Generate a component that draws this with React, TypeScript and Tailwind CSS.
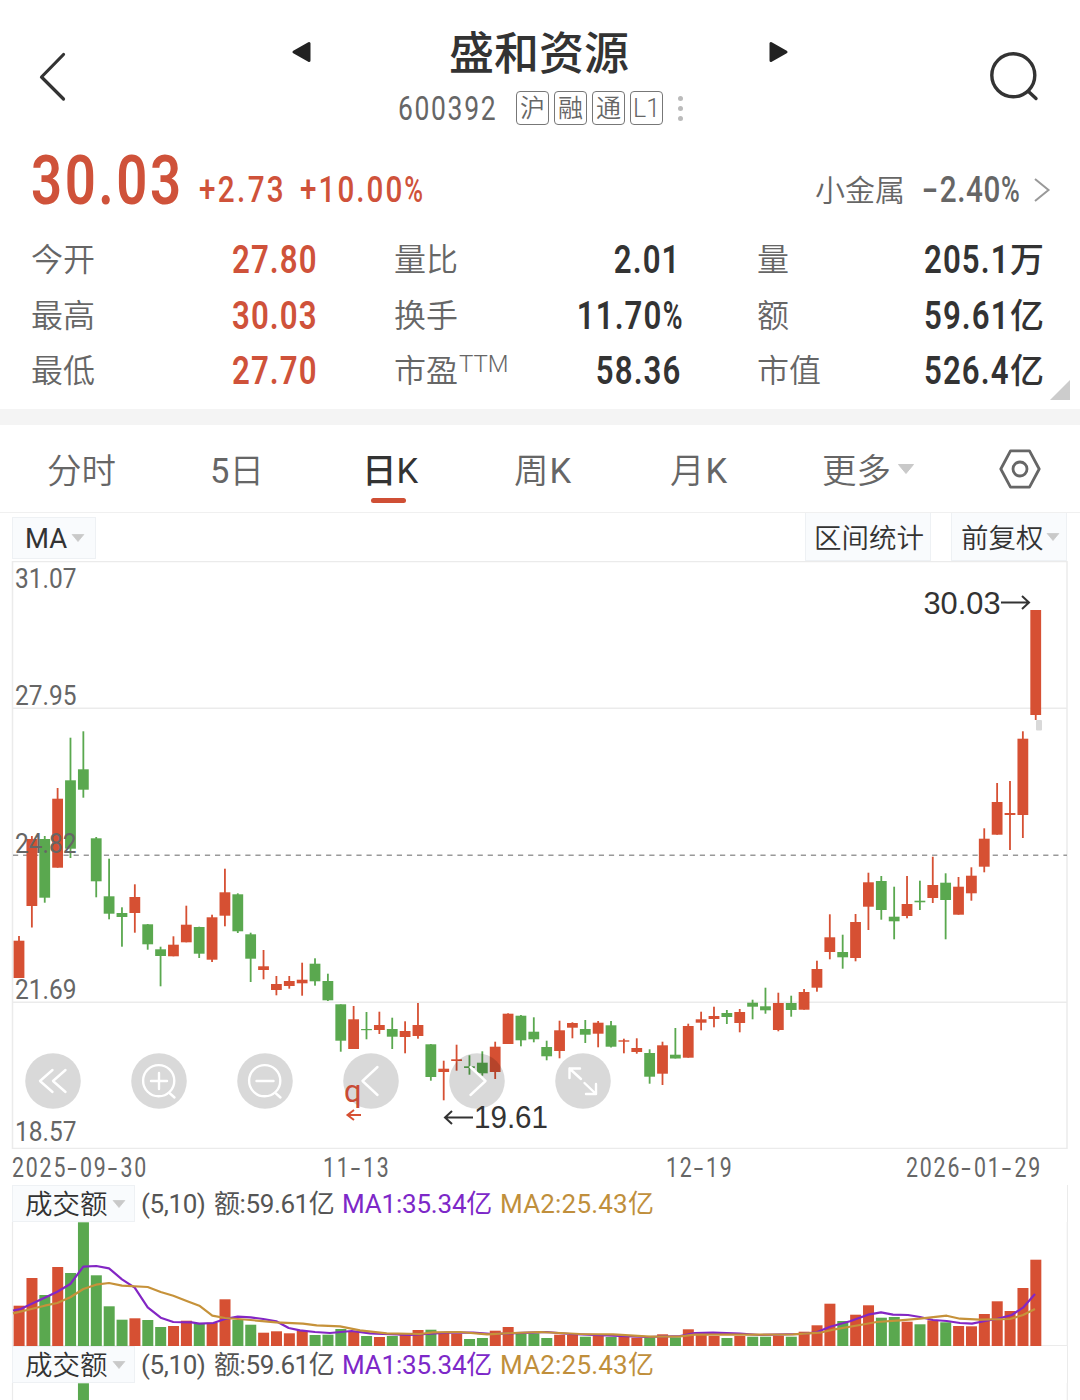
import React from 'react';

const RED = '#d65033';
const GREEN = '#5aa84f';
const STEP = 12.87;
const X0 = 18.9;

// [direction, high, bodyTop, bodyBottom, low, volumeTop]
type Candle = [string, number, number, number, number, number];
const candles: Candle[] = [
  ['R', 936, 940.7, 978, 978, 1305.7], ['R', 836, 839, 906, 927.5, 1278], ['G', 836, 839, 897.7, 902.7, 1295],
  ['R', 788, 798.7, 867.7, 867.7, 1267], ['G', 737.7, 780.3, 848.7, 858, 1273], ['G', 731.3, 769.3, 789.7, 797.7, 1222.3],
  ['G', 837, 838.3, 881.3, 897.3, 1275.3], ['G', 858.7, 896.3, 913.7, 919.3, 1306.3], ['G', 907.3, 913, 917, 946.7, 1319.7],
  ['R', 884.3, 897, 913, 932.7, 1318.3], ['G', 924, 924.3, 944.3, 949.7, 1320], ['G', 946.7, 949.3, 956, 986.3, 1327],
  ['R', 936.3, 944.7, 956.3, 956.3, 1326], ['R', 905.7, 924.7, 942.3, 942.3, 1320.7], ['G', 926.7, 927, 953.7, 958, 1324],
  ['R', 914.7, 917.3, 959.7, 962, 1322.7], ['R', 868.7, 892.3, 915.7, 926.3, 1299.3], ['G', 893.3, 894.3, 931.3, 933, 1320],
  ['G', 932.7, 934.3, 958.7, 982, 1324.7], ['R', 950, 966.3, 970, 979.3, 1332.7], ['R', 976, 984, 990, 995.3, 1331.3],
  ['R', 976, 981, 986, 988.7, 1333.3], ['R', 962.7, 979.7, 983.3, 995.7, 1331], ['G', 958.3, 963.7, 981.3, 985.7, 1335],
  ['G', 973.7, 981, 1000.3, 1001, 1334.7], ['G', 1004.3, 1004.3, 1040.7, 1051.7, 1329], ['R', 1006, 1019.3, 1049, 1049, 1331],
  ['G', 1012, 1029, 1030.2, 1039.3, 1336], ['R', 1011.7, 1025, 1030, 1034, 1337], ['G', 1017.7, 1029, 1036.7, 1049, 1336],
  ['R', 1021.3, 1031, 1037, 1053.3, 1334], ['R', 1003, 1025, 1036, 1038.7, 1330], ['G', 1044, 1044.3, 1077, 1080.7, 1329.7],
  ['R', 1060.7, 1068.7, 1072, 1100.3, 1332.7], ['R', 1044.7, 1059.3, 1061, 1070.7, 1333.7], ['G', 1055.3, 1066.3, 1068, 1074.7, 1339],
  ['G', 1051.3, 1062.7, 1073.3, 1075.7, 1338], ['R', 1041.7, 1046.7, 1072, 1079, 1330.7], ['R', 1013.3, 1013.7, 1044, 1044, 1327],
  ['G', 1015, 1015.7, 1040.3, 1046.3, 1333.7], ['G', 1017.3, 1031.7, 1039.3, 1042.3, 1333.3], ['G', 1040.7, 1047, 1056.3, 1060.3, 1338],
  ['R', 1020.7, 1030.3, 1051, 1058.3, 1334.7], ['R', 1022.3, 1023, 1027.7, 1038.3, 1335], ['G', 1020, 1029, 1034.7, 1043, 1336.7],
  ['R', 1021, 1022.7, 1033.7, 1047.3, 1335.7], ['G', 1021, 1025.3, 1046.7, 1047.5, 1337], ['R', 1038.7, 1040.3, 1041.7, 1053.3, 1336.3],
  ['R', 1038.3, 1048, 1052, 1053.7, 1337.7], ['G', 1049.3, 1053, 1076.7, 1083.7, 1337.3], ['R', 1041.7, 1045.3, 1073.7, 1085, 1334.3],
  ['G', 1028, 1054.7, 1058.5, 1058.5, 1337.3], ['R', 1023.7, 1026, 1057.7, 1057.7, 1329.3], ['R', 1011.7, 1019.3, 1022.7, 1030.3, 1335],
  ['R', 1006.7, 1016, 1019, 1027.3, 1336], ['G', 1010, 1013, 1017, 1024, 1338], ['R', 1009, 1012, 1023, 1032.3, 1336],
  ['G', 999.7, 1002.7, 1006.7, 1019.3, 1336.7], ['G', 987.7, 1006.3, 1010.3, 1013.7, 1336.7], ['R', 992.7, 1003, 1030, 1031.3, 1335.7],
  ['G', 995.7, 1003, 1010, 1016.7, 1336.7], ['R', 989, 992, 1009.7, 1009.7, 1331.7], ['R', 960.7, 969, 987.7, 991.7, 1325.3],
  ['R', 914.3, 937.3, 952, 959.3, 1303.7], ['G', 934.7, 952, 957.3, 968.7, 1321], ['R', 914, 922, 958, 961.3, 1314.7],
  ['R', 872.7, 882.3, 906.7, 930, 1305.3], ['G', 876, 881, 910, 919.7, 1317.7], ['G', 886.7, 916.7, 921.3, 939.3, 1317],
  ['R', 876, 904, 916, 918.3, 1321.7], ['G', 880.7, 900.7, 902.3, 910, 1324.3], ['R', 856.7, 885, 898, 903, 1320.3],
  ['G', 873.3, 882.7, 900, 939.3, 1322.3], ['R', 877, 886.7, 914.7, 914.7, 1326], ['R', 867.3, 875.7, 893.3, 900.7, 1326.3],
  ['R', 828.3, 838.7, 866.7, 872.3, 1314], ['R', 783, 802, 834.7, 834.7, 1301.3], ['R', 781, 813, 815, 850, 1311],
  ['R', 731.3, 738.7, 815, 838, 1288], ['R', 610, 610, 715, 720, 1259.7],
];

const ma1 =
  '13,1310.5 20.7,1309 36,1301.7 44.7,1297.7 57.3,1291.7 70.3,1284 83.3,1266.7 96.3,1266 109,1268.3 122,1279.3 134.7,1287.7 147.7,1307.3 160.7,1317.7 173.3,1322 191.7,1322.3 199.3,1323.7 213.3,1323 225,1319 237.7,1316.7 250.7,1317.3 263.3,1319 276.3,1321.3 288.7,1328 300,1330.3 315,1332 330,1333 351.7,1331 370,1333.3 410,1335 446.7,1332.7 473,1332.7 493,1334 530,1332.7 546.7,1332 570,1334 613,1335.7 647,1337 680,1336 695,1333 713,1332.7 740,1333.7 760,1335 800,1334 816.7,1332.3 830,1326.7 850,1321.3 868,1314.7 881,1312.3 893,1314.7 908,1315 920,1317 933,1320 946.7,1321 960,1323 972,1323.7 985,1321 996.7,1319 1011.7,1315 1023,1307.7 1035,1294';
const ma2 =
  '13,1313.3 19,1312 44.7,1305.7 57.3,1303 70.3,1297.3 83.3,1289 96,1284.7 109,1283 122,1285.7 147.7,1287 160.7,1292 173.3,1295.7 186.7,1301 199.3,1305.7 212.3,1315.7 225,1318 250.7,1320 276,1322.3 303,1323.7 316.7,1325.3 340,1326.3 360,1330.3 386.7,1333.3 420,1334 433,1332.3 460,1332 487,1334.3 513,1333 540,1332 580,1334 613,1334.3 650,1336.7 680,1336.3 695,1334.7 746.7,1334.7 793,1334.3 820,1332.7 833,1329.7 860,1325 876.7,1322 900,1320.3 920,1318.7 946.7,1315.7 960,1318.7 980,1319.7 1010,1319 1023,1315 1035,1309';

// Condensed figures with a wide hyphen and a narrow percent sign
function Num({ text, className, end }: { text: string; className: string; end?: boolean }) {
  return (
    <span className={`flex whitespace-nowrap font-[Roboto,sans-serif] leading-none ${end ? 'justify-end' : ''} ${className}`}>
      <span className={`block scale-x-[0.79] ${end ? 'origin-right' : 'origin-left'}`}>
        {text.split(/([-%])/).map((part, i) => {
          if (part === '-') return <span key={i} className="inline-block w-[0.6em] text-center"><span className="inline-block scale-x-[1.6]">-</span></span>;
          if (part === '%') return <span key={i} className="inline-block w-[0.6em] origin-left scale-x-[0.86]">%</span>;
          return part;
        })}
      </span>
    </span>
  );
}

function Caret({ className }: { className: string }) {
  return (
    <svg viewBox="0 0 18 10" className={className}>
      <path d="M1.5 0.5H16.5L9 9.5Z" fill="#c9c9c9" stroke="#c9c9c9" strokeLinejoin="round" />
    </svg>
  );
}

function Header() {
  return (
    <header className="flex h-[144px] items-start">
      <svg viewBox="0 0 30 52" className="ml-[38px] mt-[51px] h-[52px] w-[30px]" fill="none" stroke="#333" strokeWidth="3.2" strokeLinecap="round" strokeLinejoin="round">
        <path d="M25.5 3.5L3.5 26L25.5 48" />
      </svg>
      <svg viewBox="0 0 20 22" className="ml-[223px] mt-[41px] h-[22px] w-[20px]">
        <path d="M3 11L18 2.5V19.5Z" fill="#222" stroke="#222" strokeWidth="3" strokeLinejoin="round" />
      </svg>
      <div className="ml-[87px] mt-[29px] w-[290px]">
        <h1 className="ml-[51px] text-[45px] font-medium leading-[44px] text-[#333]">盛和资源</h1>
        <div className="mt-[18px] flex h-[34px] items-center">
          <Num text="600392" className="mt-[2px] w-[118px] text-[33.5px] tracking-[2.1px] text-[#666]" />
          <div className="flex gap-[5px]">
            {['沪', '融', '通', 'L1'].map((t) => (
              <span key={t} className="flex h-[34px] w-[33px] items-center justify-center rounded-[4px] border-[1.5px] border-[#777] pt-[1px] font-[Roboto,'Noto_Sans_CJK_SC',sans-serif] text-[25px] font-[350] leading-none text-[#666]">
                {t}
              </span>
            ))}
          </div>
          <div className="ml-[15px] flex flex-col gap-[5px]">
            <i className="size-[5px] rounded-full bg-[#bbb]" />
            <i className="size-[5px] rounded-full bg-[#bbb]" />
            <i className="size-[5px] rounded-full bg-[#bbb]" />
          </div>
        </div>
      </div>
      <svg viewBox="0 0 20 22" className="ml-[81px] mt-[41px] h-[22px] w-[20px]">
        <path d="M17 11L2 2.5V19.5Z" fill="#222" stroke="#222" strokeWidth="3" strokeLinejoin="round" />
      </svg>
      <svg viewBox="0 0 52 52" className="ml-[199px] mt-[50px] size-[52px]" fill="none" stroke="#333" strokeWidth="3.4" strokeLinecap="round">
        <circle cx="25.3" cy="25.3" r="21.5" />
        <path d="M40.5 41.5L48 48.5" />
      </svg>
    </header>
  );
}

function PriceRow() {
  return (
    <section className="flex h-[88px] items-start text-[#cf523a]">
      <Num text="30.03" className="ml-[31px] mt-[2px] w-[168px] text-[69px] font-semibold tracking-[3.2px]" />
      <Num text="+2.73" className="mt-[27px] w-[101px] text-[37.5px] font-medium tracking-[3px]" />
      <Num text="+10.00%" className="mt-[27px] w-[515px] text-[37.5px] font-medium tracking-[2.6px]" />
      <span className="mt-[29px] w-[107px] text-[30px] font-[350] leading-[30px] text-[#666]">小金属</span>
      <Num text="-2.40%" className="mt-[27px] w-[111px] text-[37.5px] font-medium tracking-[0.8px] text-[#666]" />
      <svg viewBox="0 0 18 26" className="mt-[33px] h-[26px] w-[18px]" fill="none" stroke="#999" strokeWidth="2">
        <path d="M2 2L15.5 13L2 24" />
      </svg>
    </section>
  );
}

const stats = [
  ['今开', '27.80', '量比', '2.01', '量', '205.1', '万'],
  ['最高', '30.03', '换手', '11.70%', '额', '59.61', '亿'],
  ['最低', '27.70', '市盈', '58.36', '市值', '526.4', '亿'],
];

function Stats() {
  return (
    <section className="relative h-[177px]">
      {stats.map(([a, av, b, bv, c, cv, unit]) => (
        <div key={a} className="flex h-[55.5px] items-center text-[32px] font-[350] leading-none text-[#666]">
          <span className="-mt-[5px] ml-[31px] w-[201px]">{a}</span>
          <Num text={av} className="w-[162px] text-[39.5px] font-semibold tracking-[1.4px] text-[#cf523a]" />
          <span className="-mt-[5px] flex w-[120px]">
            {b}
            {b === '市盈' && <span className="ml-[1px] font-[Roboto,sans-serif] text-[24px] font-[350] leading-none">TTM</span>}
          </span>
          <Num end text={bv} className="w-[167px] text-[39.5px] font-semibold tracking-[1.4px] text-[#333]" />
          <span className="-mt-[5px] ml-[76px] w-[167px]">{c}</span>
          <Num text={cv} className="w-[86px] text-[39.5px] font-semibold tracking-[1.4px] text-[#333]" />
          <span className="-mt-[3px] text-[34px] font-medium text-[#333]">{unit}</span>
        </div>
      ))}
      <svg viewBox="0 0 20 20" className="absolute bottom-[9px] right-[10px] size-[20px]">
        <path d="M20 0V20H0Z" fill="#ccc" />
      </svg>
    </section>
  );
}

function Tabs() {
  return (
    <nav className="flex h-[88px] items-center border-b border-[#f0f0f0] font-[Roboto,'Noto_Sans_CJK_SC',sans-serif] text-[34.5px] font-[350] leading-none text-[#666]">
      <span className="ml-[47px] mt-[5px] w-[163px]">分时</span>
      <span className="mt-[5px] w-[152px]"><span className="font-normal">5</span>日</span>
      <span className="relative mt-[5px] w-[152px] text-[#333]">
        <span className="font-medium">日</span>
        <span className="font-[450]">K</span>
        <i className="absolute -bottom-[15px] left-[9px] h-[5px] w-[35px] rounded-full bg-[#cf4f35]" />
      </span>
      <span className="mt-[5px] w-[156px]">周<span className="ml-[1px] font-normal">K</span></span>
      <span className="mt-[5px] w-[152px]">月<span className="ml-[1px] font-normal">K</span></span>
      <span className="mt-[5px] w-[75px]">更多</span>
      <Caret className="h-[10px] w-[18px]" />
      <svg viewBox="0 0 42 40" className="ml-[84px] h-[40px] w-[42px]" fill="none" stroke="#666" strokeWidth="2.8" strokeLinejoin="round">
        <path d="M11.5 1.8H30.5L40.2 20L30.5 38.2H11.5L1.8 20Z" />
        <circle cx="21" cy="20" r="7" />
      </svg>
    </nav>
  );
}

function Toolbar() {
  return (
    <div className="flex h-[48px] items-start font-[Roboto,'Noto_Sans_CJK_SC',sans-serif] text-[27.5px] font-[350] leading-none text-[#333]">
      <div className="ml-[12px] mt-[4px] flex h-[42px] w-[84px] items-center border border-[#eef1f4] bg-[#f9fbfd] pl-[12px]">
        <span className="mt-[1px] w-[46px] font-normal">MA</span>
        <Caret className="h-[8px] w-[14px]" />
      </div>
      <div className="ml-[709px] flex h-[48px] w-[126px] items-center border border-t-0 border-[#eef1f4] bg-[#f9fbfd] pl-[8px] pt-[4px]">区间统计</div>
      <div className="ml-[20px] flex h-[48px] w-[116px] items-center border border-t-0 border-[#eef1f4] bg-[#f9fbfd] pl-[9px]">
        <span className="mt-[4px] w-[85px] whitespace-nowrap">前复权</span>
        <Caret className="h-[8px] w-[14px] shrink-0" />
      </div>
    </div>
  );
}

function PriceChart() {
  return (
    <svg viewBox="0 561 1080 588" className="block h-[588px] w-[1080px]">
      <rect x="12.5" y="561.5" width="1054.5" height="587" fill="none" stroke="#ebebeb" strokeWidth="1.5" />
      <path d="M12 708.3H1067M12 1002.3H1067" stroke="#ebebeb" strokeWidth="1.5" />
      <path d="M13 855.3H1067" stroke="#999" strokeWidth="1.4" strokeDasharray="5.2 4.9" />
      {candles.map(([d, hi, top, bot, lo], i) => {
        const x = X0 + STEP * i;
        const c = d === 'R' ? RED : GREEN;
        return (
          <g key={i} fill={c}>
            <rect x={x - 0.8} y={hi} width="1.8" height={lo - hi} />
            <rect x={x - 5.3} y={top} width="10.8" height={bot - top} />
          </g>
        );
      })}
      <rect x="1036" y="720" width="6" height="10.5" rx="1" fill="#d9d9d9" />
      <g fill="#666" fontFamily="Roboto, sans-serif" fontSize="28">
        {[['31.07', 588], ['27.95', 705], ['24.82', 852.5], ['21.69', 999], ['18.57', 1141]].map(([t, y]) => (
          <text key={t} x="15" y={y} textLength="61.5" lengthAdjust="spacingAndGlyphs">{t}</text>
        ))}
      </g>
      <g fill="#000" fillOpacity="0.15">
        {[53, 159, 265, 371, 477, 583].map((x) => <circle key={x} cx={x} cy="1081" r="27.8" />)}
      </g>
      <g fill="none" stroke="#fff" strokeWidth="2.4" strokeLinecap="round" strokeLinejoin="round">
        <path d="M52.5 1070L40 1081L52.5 1092M65.5 1070L53 1081L65.5 1092" />
        <circle cx="158.7" cy="1080.7" r="15.6" />
        <path d="M151 1081H167M159 1073V1089M170 1093.5L174.5 1097.5" />
        <circle cx="264.7" cy="1080.7" r="15.6" />
        <path d="M256.5 1081H273.5M276 1093.5L280.5 1097.5" />
        <path d="M377.5 1067L362.5 1081L377.5 1095M470.5 1067L485.5 1081L470.5 1095" />
        <path d="M569.5 1078V1068.5H580M569.5 1068.5L581 1079M596 1084V1094H586M596 1094L584.5 1083" />
      </g>
      <text x="344" y="1102" fill="#c94b35" fontFamily="Roboto, sans-serif" fontSize="31">q</text>
      <path d="M361 1115H348M354 1110L347.5 1115L354 1120" fill="none" stroke="#d65033" strokeWidth="2" />
      <g fill="#333" fontFamily="'Liberation Sans', sans-serif" fontSize="31">
        <text x="923.5" y="613.5" textLength="77" lengthAdjust="spacingAndGlyphs">30.03</text>
        <text x="474" y="1128.3" textLength="74" lengthAdjust="spacingAndGlyphs">19.61</text>
      </g>
      <g fill="none" stroke="#333" strokeWidth="2">
        <path d="M1001 602.5H1028M1022 596L1029 602.5L1022 609" />
        <path d="M473 1117.5H446M452 1111L445 1117.5L452 1124" />
      </g>
    </svg>
  );
}

function DateAxis() {
  return (
    <div className="flex h-[36px] items-center pt-[3px] text-[27px] text-[#666]">
      <Num text="2025-09-30" className="ml-[12px] w-[311px] tracking-[2.3px]" />
      <Num text="11-13" className="w-[343px] tracking-[2.1px]" />
      <Num text="12-19" className="w-[240px] tracking-[2.1px]" />
      <Num text="2026-01-29" className="tracking-[2.3px]" />
    </div>
  );
}

function VolumePanel({ partial }: { partial?: boolean }) {
  return (
    <section className="h-[161px] overflow-hidden font-[Roboto,'Noto_Sans_CJK_SC',sans-serif] text-[26px] leading-none">
      <div className="ml-[12px] flex h-[37px] w-[1056px] items-center border-r border-[#ebebeb] text-[#555]">
        <div className="flex h-[37px] w-[123px] items-center border border-[#eef1f4] bg-[#f9fbfd] pl-[12px] text-[27.5px] font-[350] text-[#333]">
          <span className="mt-[2px] w-[87px] whitespace-nowrap">成交额</span>
          <Caret className="h-[8px] w-[14px] shrink-0" />
        </div>
        <span className="ml-[6px] w-[73px] whitespace-nowrap tracking-[-0.4px]">(5,10)</span>
        <span className="w-[128px] whitespace-nowrap tracking-[-0.4px]">额:59.61亿</span>
        <span className="w-[158px] whitespace-nowrap tracking-[-0.2px] text-[#7d28c8]">MA1:35.34亿</span>
        <span className="whitespace-nowrap tracking-[0.2px] text-[#c08f3c]">MA2:25.43亿</span>
      </div>
      <svg viewBox="0 1222 1080 124" className="block h-[124px] w-[1080px]">
        <path d="M12.5 1222V1346M1067.3 1222V1346M12 1345.6H1067" stroke="#ebebeb" strokeWidth="1.2" />
        {candles.map(([d, , , , , top], i) => (
          <rect key={i} x={X0 + STEP * i - 5.3} y={top} width="11" height={1346 - top} fill={d === 'R' ? RED : GREEN} />
        ))}
        {!partial && (
          <g fill="none" strokeWidth="2.2" strokeLinejoin="round">
            <polyline points={ma1} stroke="#8326c4" />
            <polyline points={ma2} stroke="#c6923a" />
          </g>
        )}
      </svg>
    </section>
  );
}

export default function App() {
  return (
    <main className="h-[1400px] w-[1080px] overflow-hidden bg-white font-['Noto_Sans_CJK_SC',sans-serif]">
      <Header />
      <PriceRow />
      <Stats />
      <div className="h-[16px] bg-[#f4f4f4]" />
      <Tabs />
      <Toolbar />
      <PriceChart />
      <DateAxis />
      <VolumePanel />
      <VolumePanel partial />
    </main>
  );
}
